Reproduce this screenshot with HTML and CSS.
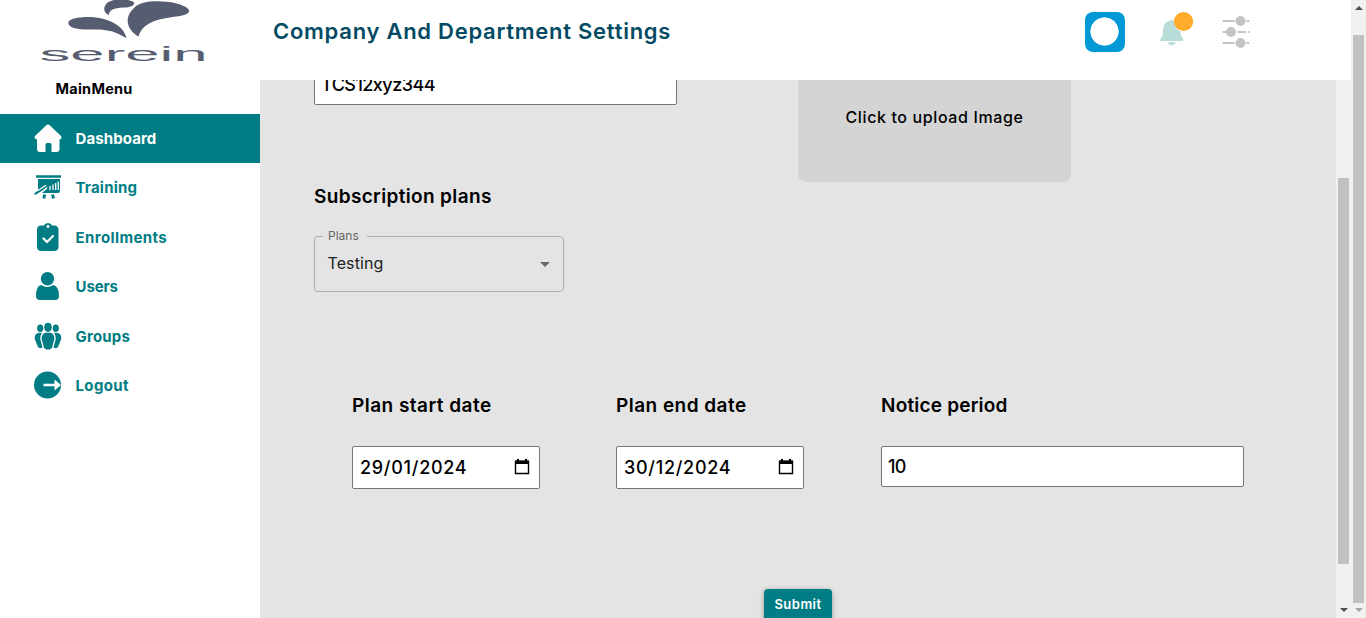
FILE: index.html
```html
<!DOCTYPE html>
<html lang="en">
<head>
<meta charset="utf-8">
<title>Company And Department Settings</title>
<link rel="stylesheet" href="styles.css">
</head>
<body>
<div class="app">
  <aside class="sidebar">
    <svg class="logo" width="164" height="63" viewBox="41 0 164 63" fill="#565d70">
      <path d="M109 15C103 13 103 7 107 3C112 -1 125 -2 133 1.500C137 5 130 8 123 7.500C114 8 109 10 109 15Z"/>
      <path d="M69 25C66 19 76 17.500 87 17C106 17 123 24 126.500 38C118 34 114 30 97 29.500C86 29.500 73 30 69 25Z"/>
      <path d="M138.500 36.500C127 30 124 18 133 9C141 0 157 1 169 2C179 3 191 8 189 12C184 20 145 13 138.500 36.500Z"/>
      <text x="39.500" y="61.300" font-size="20" textLength="168" lengthAdjust="spacingAndGlyphs">serein</text>
    </svg>
    <div class="menu-title"><span>MainMenu</span></div>
    <nav class="menu">
      <a class="item active"><svg class="icon" viewBox="0 0 28 28"><path fill="currentColor" d="M12 1.500Q14-.5 16 1.500L27 12Q28.500 15 25.500 15.500V25Q25.500 28 22.500 28H17.500V20.500Q17.500 19 16 19H13Q11.500 19 11.500 20.500V28H6Q3 28 3 25V15.500Q-.5 15 1 12Z"/></svg><span class="t-dash">Dashboard</span></a>
      <a class="item"><svg class="icon" viewBox="0 0 28 28"><path fill="currentColor" d="M2 2.300H27V4.700H2ZM4 6H26V18Q26 20 24 20H8L13 15.500L11.500 13.500L4 18.500Z"/><path stroke="currentColor" stroke-width="2.200" stroke-linecap="round" fill="none" d="M1.500 20.700L11 14.500"/><path stroke="currentColor" stroke-width="3" d="M10.700 21.500L9.800 25.500M18.500 21.500L19.500 25.500"/><path stroke="#fff" stroke-width="1.300" d="M16 13V17M19 11.500V17M21.700 10V17M24.300 8.500V17"/><path stroke="#fff" stroke-width="1.200" fill="none" d="M3.500 17.700L12 12.300M7 19.700L13 14.500"/></svg><span class="t-train">Training</span></a>
      <a class="item"><svg class="icon" viewBox="0 0 28 28"><path fill="currentColor" d="M7 2.500H10Q11 0 14 0T18 2.500H20Q24.500 2.500 24.500 7V23.500Q24.500 28 20 28H7.500Q3 28 3 23.500V7Q3 2.500 7 2.500Z"/><circle cx="14" cy="3.500" r="1.400" fill="#fff"/><path d="M9.500 15.500L13 19L19 13" fill="none" stroke="#fff" stroke-width="2.200" stroke-linecap="round" stroke-linejoin="round"/></svg><span class="t-enroll">Enrollments</span></a>
      <a class="item"><svg class="icon" viewBox="0 0 28 28" fill="currentColor"><circle cx="13.500" cy="6.700" r="6.700"/><path d="M7 13Q13.500 17 19 13Q25 14 25 24Q25 28 21 28H6Q2 28 2 24Q2 14 7 13Z"/></svg><span class="t-users">Users</span></a>
      <a class="item"><svg class="icon" viewBox="0 0 28 28" fill="currentColor"><ellipse cx="14" cy="5.200" rx="3.700" ry="4.500"/><ellipse cx="6.200" cy="6.300" rx="3.100" ry="3.800"/><ellipse cx="21.800" cy="6.300" rx="3.100" ry="3.800"/><path d="M10.500 11Q14 10 17.500 11Q21 13 20.300 17L18 26Q14 29.500 10 26L7.700 17Q7 13 10.500 11ZM4 11Q6.500 10.500 8 11Q5.500 14 6.500 18L8.500 25.500Q5.500 27 4 25L.8 17Q.3 12 4 11ZM24 11Q21.500 10.500 20 11Q22.500 14 21.500 18L19.500 25.500Q22.500 27 24 25L27.200 17Q27.700 12 24 11Z"/></svg><span class="t-groups">Groups</span></a>
      <a class="item"><svg class="icon" viewBox="0 0 28 28"><circle cx="13.500" cy="14" r="13.500" fill="currentColor"/><path fill="#fff" d="M9.500 12.700H20.500V8.500L27 14L20.500 19.500V15.300H9.500Z"/></svg><span class="t-logout">Logout</span></a>
    </nav>
  </aside>
  <div class="page">
    <header class="header">
      <h1><span>Company And Department Settings</span></h1>
      <div class="avatar"></div>
      <svg class="bell" width="34" height="36" viewBox="1159 11 34 36"><path fill="#b8dcd7" d="M1160 41Q1159.500 39 1162 37Q1163 35 1163 31Q1163 22 1170 20.500Q1171.500 18.500 1173.500 20.500Q1175 30 1180.500 31.500Q1180.500 36 1182 37.500Q1184 39 1183 41ZM1167 42.300H1176Q1171.500 48.500 1167 42.300Z"/><circle cx="1183.500" cy="21.500" r="9.600" fill="#ffaa2b"/></svg>
      <svg class="sliders" width="28" height="34" viewBox="1222 15 28 34" stroke="#c4c4c4" stroke-width="2.200" stroke-linecap="round"><path d="M1223.500 21H1248.500M1223.500 32H1234M1238.500 32H1245M1248.600 32H1248.700M1223.500 43H1248.500"/><path stroke="#fff" stroke-width="1" d="M1235 19V23M1235 41V45M1246 19V23M1246 41V45"/><g fill="#c4c4c4" stroke="none"><circle cx="1240.500" cy="21" r="4.900"/><circle cx="1231" cy="32" r="4.900"/><circle cx="1240.500" cy="43" r="4.900"/></g></svg>
    </header>
    <div class="body">
      <main class="content">
        <div class="top-row">
          <div class="field code"><span>TCS12xyz344</span></div>
          <div class="upload"><span>Click to upload Image</span></div>
        </div>
        <h2 class="plans-title"><span>Subscription plans</span></h2>
        <fieldset class="select"><legend><span>Plans</span></legend>
          <div class="select-value"><span>Testing</span><i class="caret"></i></div>
        </fieldset>
        <div class="dates">
          <div class="col">
            <h2><span>Plan start date</span></h2>
            <div class="field date"><span>29/01/2024</span><svg width="16" height="18" viewBox="0 0 16 18"><path d="M1.500 3.500H14.500V15.500H1.500Z" fill="none" stroke="#000" stroke-width="1.400"/><path d="M1 2.500H15V6H1ZM3 1H5V3H3ZM11 1H13V3H11Z"/></svg></div>
          </div>
          <div class="col">
            <h2><span>Plan end date</span></h2>
            <div class="field date"><span>30/12/2024</span><svg width="16" height="18" viewBox="0 0 16 18"><path d="M1.500 3.500H14.500V15.500H1.500Z" fill="none" stroke="#000" stroke-width="1.400"/><path d="M1 2.500H15V6H1ZM3 1H5V3H3ZM11 1H13V3H11Z"/></svg></div>
          </div>
          <div class="col last">
            <h2><span>Notice period</span></h2>
            <div class="field notice"><span>10</span></div>
          </div>
        </div>
        <button class="submit"><span>Submit</span></button>
      </main>
      <div class="scroll inner"><div class="thumb"></div><svg width="8" height="4" viewBox="0 0 8 4"><path d="M0 0H8L4 4Z" fill="#505050"/></svg></div>
    </div>
  </div>
  <div class="scroll outer"><svg width="8" height="4" viewBox="0 0 8 4"><path d="M0 4H8L4 0Z" fill="#505050"/></svg><div class="thumb"></div><svg width="8" height="4" viewBox="0 0 8 4"><path d="M0 0H8L4 4Z" fill="#a3a3a3"/></svg></div>
</div>
</body>
</html>
```
FILE: styles.css
```css
* { box-sizing: border-box; }
body { margin: 0; background: #fff; font-family: Inter, "Liberation Sans", sans-serif; color: #000; }
span { white-space: nowrap; }
.app { display: flex; width: 1366px; height: 618px; overflow: hidden; }
.sidebar { width: 260px; flex: none; }
.logo { display: block; margin-left: 41px; overflow: visible; font-family: "Liberation Sans", sans-serif; }
.menu-title { height: 51px; padding: 15px 0 0 55.500px; font-size: 14.500px; line-height: 22px; font-weight: 700; letter-spacing: .25px; }
.item { display: flex; align-items: center; gap: 14px; height: 49.500px; padding-left: 33.500px; color: #007d84; font-size: 15px; font-weight: 700; letter-spacing: .2px; }
.item.active { height: 49px; background: #007d84; color: #fff; }
.t-dash { letter-spacing: .1px; }
.t-enroll { letter-spacing: .4px; }
.t-users { letter-spacing: -.1px; }
.t-logout { letter-spacing: .35px; }
.icon { width: 28px; height: 28px; flex: none; margin-top: -1px; }
.page { width: 1091px; display: flex; flex-direction: column; }
.header { display: flex; height: 80px; flex: none; padding: 12px 0 0 13px; align-items: flex-start; }
h1 { width: 812px; margin: 0; font-size: 22px; line-height: 38px; font-weight: 600; letter-spacing: .73px; color: #034b63; }
.avatar { width: 40px; height: 40px; border-radius: 8px; background: radial-gradient(circle at 19.500px 19.500px, #fff 13.800px, #0099d6 14.400px); }
.bell { margin: -1px 0 0 34px; }
.sliders { margin: 3px 0 0 29px; }
.body { display: flex; height: 538px; overflow: hidden; }
.content { width: 1076px; background: #e4e4e4; padding-left: 54px; display: flex; flex-direction: column; margin-top: -28px; height: 566px; }
.content > * { flex: none; }
.top-row { display: flex; gap: 121px; }
.field { display: flex; align-items: center; background: #fff; border: 1px solid #767676; border-radius: 2px; font-size: 18px; font-weight: 500; padding: 0 7px; }
.code { width: 363px; height: 41px; margin-top: 12px; padding: 0 6px; letter-spacing: -.55px; }
.upload { width: 273px; height: 130px; background: #d4d4d4; border-radius: 8px; display: flex; align-items: center; justify-content: center; font-size: 16px; font-weight: 500; letter-spacing: .62px; }
h2 { margin: 0; font-size: 19px; line-height: 28px; font-weight: 600; letter-spacing: .47px; }
.plans-title { padding-top: 1px; letter-spacing: .35px; }
.select { width: 250px; height: 63px; margin: 18px 0 0; padding: 0 13px 0 12.500px; border: 1px solid #adadad; border-radius: 4px; }
.select legend { margin-left: -4.500px; padding: 0 8px 0 5px; font-size: 12px; line-height: 14px; color: #666; }
.select-value { display: flex; align-items: center; justify-content: space-between; height: 40px; font-size: 16px; color: #222; letter-spacing: .1px; }
.caret { border: 5px solid transparent; border-top-color: #666; border-bottom: 0; margin-top: 2px; }
.dates { display: flex; gap: 76px; margin: 100px 0 0 38px; }
.dates .field { margin-top: 26px; }
.date { width: 188px; height: 43px; justify-content: space-between; padding-right: 9px; letter-spacing: .72px; }
.date svg { margin-top: -2px; }
.last { margin-left: 1px; }
.last h2 { letter-spacing: .2px; }
.notice { width: 363px; height: 41px; padding: 0 6px; letter-spacing: -.8px; }
.submit { width: 68px; height: 36px; margin: 100px 0 0 450px; padding: 0 0 6px; border: 0; border-radius: 4px; background: #007d84; color: #fff; font: 600 13px Inter, sans-serif; letter-spacing: .5px; box-shadow: 0 1px 5px rgba(0,0,0,.35); }
.scroll { width: 15px; flex: none; background: #f1f1f1; display: flex; flex-direction: column; align-items: center; }
.thumb { width: 11px; background: #c1c1c1; }
.inner .thumb { height: 386px; margin: 98px 0 44px; }
.outer { padding-top: 6px; }
.outer .thumb { height: 568px; margin: 25px 0 5px; }
```
